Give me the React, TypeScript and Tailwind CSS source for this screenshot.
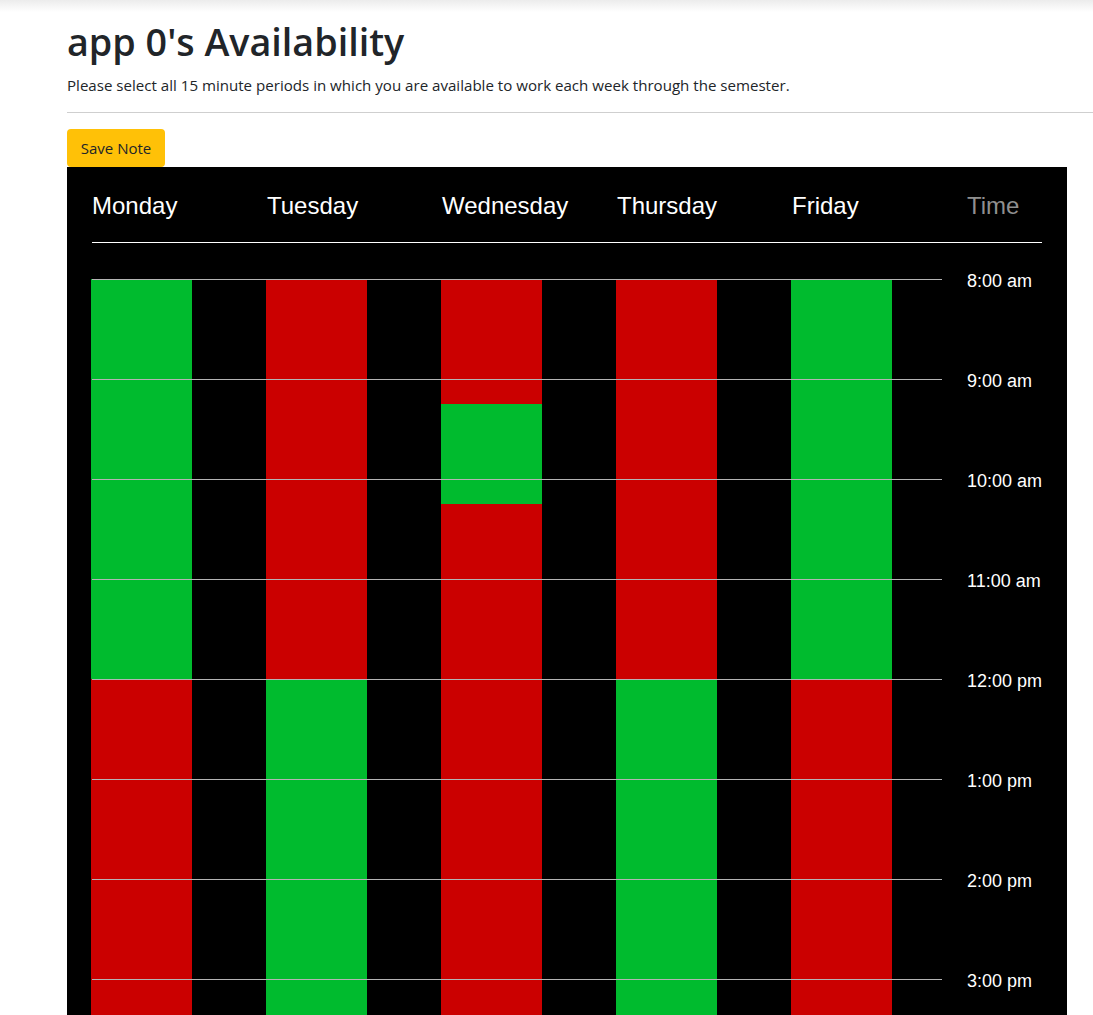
import React from "react";

const G = "#00bb2e";
const R = "#cb0000";

const days = ["Monday", "Tuesday", "Wednesday", "Thursday", "Friday"];

// slots of 15 minutes starting 8:00; true = available (green)
const NUM_HOURS = 10;
const TOTAL = NUM_HOURS * 4;
function build(fn: (i: number) => boolean): boolean[] {
  return Array.from({ length: TOTAL }, (_, i) => fn(i));
}
const avail: boolean[][] = [
  build((i) => i < 16),
  build((i) => i >= 16),
  build((i) => i >= 5 && i < 9),
  build((i) => i >= 16),
  build((i) => i < 16),
];

const hourLabels = [
  "8:00 am",
  "9:00 am",
  "10:00 am",
  "11:00 am",
  "12:00 pm",
  "1:00 pm",
  "2:00 pm",
  "3:00 pm",
  "4:00 pm",
  "5:00 pm",
];

export default function App() {
  const bs = { fontFamily: '"Open Sans", "Noto Sans", sans-serif' };
  const ar = { fontFamily: '"Liberation Sans", Arial, sans-serif' };
  return (
    <div className="min-h-screen bg-white overflow-hidden">
      <div className="h-[12px] bg-gradient-to-b from-[#ececec] to-white" />
      <div style={bs} className="text-[#212529]">
        <h1 className="ml-[67px] mt-[6px] text-[37.7px] leading-[48px] font-semibold">
          app 0's Availability
        </h1>
        <p className="ml-[67px] mt-[7px] text-[15.1px] leading-[24px]">
          Please select all 15 minute periods in which you are available to work each week through the semester.
        </p>
        <div className="ml-[67px] mt-[15px] h-px bg-[#cfcfcf]" />
        <button className="ml-[67px] mt-[16px] h-[38px] w-[98px] rounded-[4px] bg-[#ffc107] text-[15px] text-[#212529] flex items-center justify-center">
          Save Note
        </button>
      </div>
      <div style={ar} className="ml-[67px] w-[1000px] bg-black pl-[24px] pr-[25px] pt-[25px] pb-[40px]">
        <div className="flex text-[24px] leading-[28px] text-white">
          {days.map((d) => (
            <div key={d} className="w-[175px] shrink-0 pl-px">
              {d}
            </div>
          ))}
          <div className="w-[75px] shrink-0 pl-px text-[#8f8f8f]">Time</div>
        </div>
        <div className="mt-[22px] ml-px h-px bg-white" />
        <div className="mt-[36px]">
          {hourLabels.map((label, h) => (
            <div key={label} className="flex">
              <div className="relative flex w-[851px] shrink-0 gap-[74px]">
                {days.map((d, di) => (
                  <div key={d} className="w-[101px] shrink-0 flex flex-col">
                    {[0, 1, 2, 3].map((q) => {
                      const ok = avail[di][h * 4 + q];
                      return (
                        <div
                          key={q}
                          className="h-[25px]"
                          style={{ backgroundColor: ok ? G : R }}
                        />
                      );
                    })}
                  </div>
                ))}
                <div className="absolute left-px right-0 top-0 h-px bg-[#b4b4b4]" />
              </div>
              <div className="ml-[25px] -mt-[8px] text-[18px] leading-[21px] text-white whitespace-nowrap">
                {label}
              </div>
            </div>
          ))}
        </div>
      </div>
    </div>
  );
}
